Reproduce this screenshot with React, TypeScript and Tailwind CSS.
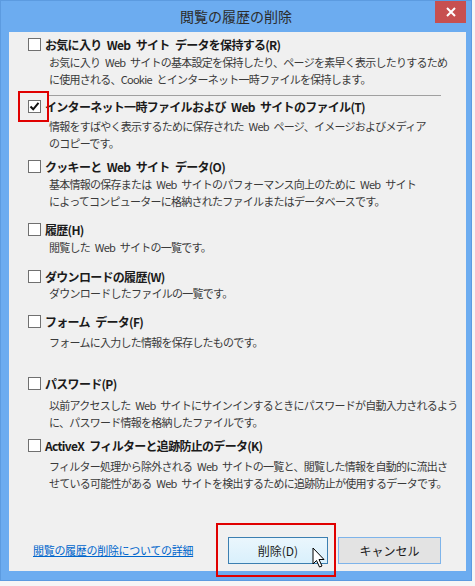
import React from "react";

const ITEMS = [
  {
    title: "お気に入り Web サイト データを保持する(R)",
    lines: [
      "お気に入り Web サイトの基本設定を保持したり、ページを素早く表示したりするため",
      "に使用される、Cookie とインターネット一時ファイルを保持します。",
    ],
    mt: "mt-[4px]",
    dt: "mt-[1px]",
  },
  {
    title: "インターネット一時ファイルおよび Web サイトのファイル(T)",
    lines: ["情報をすばやく表示するために保存された Web ページ、イメージおよびメディア", "のコピーです。"],
    checked: true,
    mt: "mt-[2px]",
    dt: "mt-[3px]",
  },
  {
    title: "クッキーと Web サイト データ(O)",
    lines: [
      "基本情報の保存または Web サイトのパフォーマンス向上のために Web サイト",
      "によってコンピューターに格納されたファイルまたはデータベースです。",
    ],
    mt: "mt-[6px]",
    dt: "mt-[1px]",
  },
  { title: "履歴(H)", lines: ["閲覧した Web サイトの一覧です。"], mt: "mt-[11px]", dt: "mt-[1px]" },
  { title: "ダウンロードの履歴(W)", lines: ["ダウンロードしたファイルの一覧です。"], mt: "mt-[12px]", dt: "mt-0" },
  { title: "フォーム データ(F)", lines: ["フォームに入力した情報を保存したものです。"], mt: "mt-[11px]", dt: "mt-[4px]" },
  {
    title: "パスワード(P)",
    lines: [
      "以前アクセスした Web サイトにサインインするときにパスワードが自動入力されるよう",
      "に、パスワード情報を格納したファイルです。",
    ],
    mt: "mt-[24px]",
    dt: "mt-[5px]",
  },
  {
    title: "ActiveX フィルターと追跡防止のデータ(K)",
    lines: [
      "フィルター処理から除外される Web サイトの一覧と、閲覧した情報を自動的に流出さ",
      "せている可能性がある Web サイトを検出するために追跡防止が使用するデータです。",
    ],
    mt: "mt-[6px]",
    dt: "mt-[4px]",
  },
];

// wider gap between Japanese and Latin words, like Meiryo UI
const sp = (s: string) => s.replace(/ /g, "\u2002");

function Checkbox({ checked }: { checked?: boolean }) {
  return (
    <span className="w-[13px] h-[13px] shrink-0 border border-[#707070] bg-white flex items-center justify-center">
      {checked && (
        <svg width="11" height="11" viewBox="0 0 11 11">
          <path d="M1.5 5.5 L4.2 8.3 L9.5 1.8" fill="none" stroke="#111" strokeWidth="2" />
        </svg>
      )}
    </span>
  );
}

function Item({ item }: { item: (typeof ITEMS)[number] }) {
  return (
    <div className={item.mt}>
      <div className="flex items-center gap-[4px] h-[17px]">
        <Checkbox checked={item.checked} />
        <span className="text-[12px] font-bold text-[#1b1b1b] tracking-[-0.7px] whitespace-nowrap leading-[17px]">
          {sp(item.title)}
        </span>
      </div>
      <div className={`${item.dt} pl-[21px] text-[11px] leading-[17px] text-[#3a3a3a] tracking-[-0.75px] whitespace-nowrap`}>
        {item.lines.map((l) => (
          <div key={l}>{sp(l)}</div>
        ))}
      </div>
    </div>
  );
}

export default function App() {
  return (
    <div
      className="relative w-[475px] h-[586px] bg-[#f6f6f6]"
      style={{ fontFamily: '"Noto Sans CJK JP", "Noto Sans", sans-serif' }}
    >
      <div className="w-[472px] h-[581px] bg-[#6cacf0] border border-[#5c9be0] flex flex-col">
        <div className="relative h-[31px] flex items-center justify-center">
          <span className="text-[14px] text-[#2b2b2b] pb-[1px]">閲覧の履歴の削除</span>
          <button className="absolute right-[5px] top-0 w-[31px] h-[22px] bg-[#c75050] flex items-center justify-center">
            <svg width="10" height="10" viewBox="0 0 10 10">
              <path d="M1 1 L9 9 M9 1 L1 9" stroke="#fff" strokeWidth="2" />
            </svg>
          </button>
        </div>

        <div className="flex-1 ml-[8px] mr-[5px] mb-[9px] bg-[#f0f0f0] flex flex-col pl-[19px]">
          <Item item={ITEMS[0]} />
          <div className="mt-[7px] h-px bg-[#a0a0a0] ml-[20px] mr-[25px]" />
          {ITEMS.slice(1).map((it) => (
            <Item key={it.title} item={it} />
          ))}

          <div className="mt-auto flex items-center pb-[7px] pr-[25px]">
            <a href="#" className="ml-[5px] text-[11px] text-[#0066cc] underline tracking-[-0.3px]">
              閲覧の履歴の削除についての詳細
            </a>
            <button className="ml-auto w-[100px] h-[27px] border border-[#3c7fb1] bg-gradient-to-b from-[#eaf6fd] to-[#d9f0fc] text-[12px] text-[#1b1b1b]">
              削除(D)
            </button>
            <button className="ml-[10px] w-[103px] h-[27px] border border-[#7eb4ea] bg-[#e3e3e3] text-[12px] text-[#1b1b1b]">
              キャンセル
            </button>
          </div>
        </div>
      </div>

      <div className="absolute left-[18px] top-[91px] w-[31px] h-[31px] border-2 border-[#e00000]" />
      <div className="absolute left-[216px] top-[523px] w-[120px] h-[54px] border-2 border-[#e00000]" />
      <svg className="absolute left-[312px] top-[547px]" width="14" height="22" viewBox="0 0 14 22">
        <path d="M1 1 L1 17 L4.5 13.5 L7.5 20 L10 19 L7 12.5 L12 12.5 Z" fill="#fff" stroke="#000" strokeWidth="1" strokeLinejoin="miter" />
      </svg>
    </div>
  );
}
